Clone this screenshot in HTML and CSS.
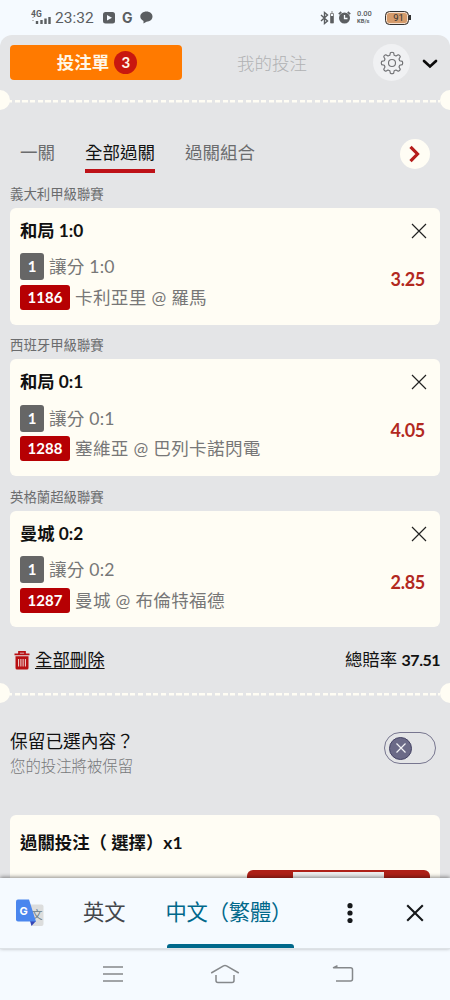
FILE: index.html
```html
<!DOCTYPE html>
<html lang="zh-Hant">
<head>
<meta charset="utf-8">
<title>投注單</title>
<link rel="stylesheet" href="styles.css">
</head>
<body>
<div class="phone">
  <header class="status">
    <div class="signal"><span>4G</span><svg width="20" height="8" viewBox="0 0 20 8"><path d="M2 1v1M2 4v1" stroke="#bbb" stroke-width="2"/><path d="M6 8V5M10.500 8V4M14.500 8V2.500M18.500 8V1" stroke="#5b5e61" stroke-width="2.400"/></svg></div>
    <span class="clock">23:32</span>
    <svg class="play" width="12" height="12" viewBox="0 0 12 12"><rect width="12" height="11.500" rx="2.500" fill="#5b5e61"/><path d="M4 3l5 2.800-5 2.800z" fill="#f5faff"/></svg>
    <span class="g-mark">G</span>
    <svg class="chat" width="13" height="13" viewBox="0 0 13 13"><path d="M6.500.5C10 .5 12.500 2.700 12.500 5.600s-2.500 5.100-6 5.100L3.500 12.500V10C1.500 9 .300 7.600.300 5.600.300 2.700 3 .5 6.500.5z" fill="#5b5e61"/></svg>
    <svg class="bt" width="15" height="14" viewBox="0 0 15 14"><path d="M1 4l6.500 6L4.500 12.500V1.500L7.500 4 1 10" fill="none" stroke="#5b5e61" stroke-width="1.400"/><path d="M10.500 2.500h3v9.500h-3zM11 1h2" fill="none" stroke="#888" stroke-width="1"/><path d="M12 5v7" stroke="#5b5e61" stroke-width="2.500"/></svg>
    <svg class="alarm" width="13" height="13" viewBox="0 0 13 13"><circle cx="6.500" cy="7" r="5.500" fill="#5b5e61"/><path d="M.8 3.200L3.300 1M12.200 3.200L9.700 1" stroke="#5b5e61" stroke-width="1.700"/><path d="M6.500 4v3.500h3" fill="none" stroke="#f5faff" stroke-width="1.300"/></svg>
    <div class="speed"><b>0.00</b><i>KB/s</i></div>
    <div class="battery">91</div><u class="cap"></u>
  </header>

  <main class="sheet">
    <div class="top">
      <button class="slip">投注單<span class="count">3</span></button>
      <span class="mine">我的投注</span>
      <span class="gear"><svg width="24" height="24" viewBox="0 0 24 24" fill="none" stroke="#717275" stroke-width="1.150" stroke-linejoin="round"><circle cx="12" cy="12" r="3.500"/><path d="M9.800 4.300L10.400 1.700Q12 .8 13.600 1.700L14.200 4.300L16 5L18.200 3.700Q20 4 20.300 5.800L19 8L19.700 9.800L22.300 10.400Q23.200 12 22.300 13.600L19.700 14.200L19 16L20.300 18.200Q20 20 18.200 20.300L16 19L14.200 19.700L13.600 22.300Q12 23.200 10.400 22.300L9.800 19.700L8 19L5.800 20.300Q4 20 3.700 18.200L5 16L4.300 14.200L1.700 13.600Q.8 12 1.700 10.400L4.300 9.800L5 8L3.700 5.800Q4 4 5.800 3.700L8 5z"/></svg></span>
      <svg class="chev" width="16" height="10" viewBox="0 0 16 10"><path d="M2 2l6 5.500L14 2" fill="none" stroke="#0b0b0b" stroke-width="2.700" stroke-linecap="round"/></svg>
    </div>
    <div class="tear"></div>

    <nav class="tabs">
      <span>一關</span><span class="on">全部過關</span><span>過關組合</span>
      <i class="next"><svg width="12" height="18" viewBox="0 0 12 18"><path d="M1.500 1.800L8.500 9l-7 7.200" fill="none" stroke="#b61e1b" stroke-width="3.200"/></svg></i>
    </nav>

    <section class="bet">
      <h3>義大利甲級聯賽</h3>
      <article class="card">
        <div class="name">和局 1:0</div>
        <div class="line"><b class="tag">1</b><span class="market">讓分 1:0</span></div>
        <div class="line"><b class="tag red">1186</b><span class="teams">卡利亞里 @ 羅馬</span></div>
        <svg class="x" width="16" height="16" viewBox="0 0 16 16"><path d="M1 1l14 14M15 1L1 15" stroke="#222" stroke-width="1.200"/></svg>
        <b class="odds">3.25</b>
      </article>
    </section>
    <section class="bet">
      <h3>西班牙甲級聯賽</h3>
      <article class="card">
        <div class="name">和局 0:1</div>
        <div class="line"><b class="tag">1</b><span class="market">讓分 0:1</span></div>
        <div class="line"><b class="tag red">1288</b><span class="teams">塞維亞 @ 巴列卡諾閃電</span></div>
        <svg class="x" width="16" height="16" viewBox="0 0 16 16"><path d="M1 1l14 14M15 1L1 15" stroke="#222" stroke-width="1.200"/></svg>
        <b class="odds">4.05</b>
      </article>
    </section>
    <section class="bet">
      <h3>英格蘭超級聯賽</h3>
      <article class="card">
        <div class="name">曼城 0:2</div>
        <div class="line"><b class="tag">1</b><span class="market">讓分 0:2</span></div>
        <div class="line"><b class="tag red">1287</b><span class="teams">曼城 @ 布倫特福德</span></div>
        <svg class="x" width="16" height="16" viewBox="0 0 16 16"><path d="M1 1l14 14M15 1L1 15" stroke="#222" stroke-width="1.200"/></svg>
        <b class="odds">2.85</b>
      </article>
    </section>

    <div class="summary">
      <svg width="16" height="19" viewBox="0 0 16 19"><path d="M.5 3.300h15M5 3V.9h6V3" fill="none" stroke="#b80f12" stroke-width="1.700"/><path d="M1.500 5.200h13V17q0 1.500-1.500 1.500H3Q1.500 18.500 1.500 17z" fill="#b80f12"/><path d="M4.600 8v7.500M6.900 8v7.500M9.100 8v7.500M11.400 8v7.500" stroke="#f0dedd" stroke-width="1"/></svg>
      <span class="clear">全部刪除</span>
      <span class="total">總賠率 <b>37.51</b></span>
    </div>
    <div class="tear"></div>

    <div class="keep">
      <div><div class="ask">保留已選內容？</div><div class="hint">您的投注將被保留</div></div>
      <span class="switch"><span class="knob"><svg width="12" height="12" viewBox="0 0 12 12"><path d="M1.500 1.500l9 9M10.500 1.500l-9 9" stroke="#f3f3f6" stroke-width="1.200"/></svg></span></span>
    </div>

    <div class="parlay">
      <div class="ptitle">過關投注（ 選擇）<span>x1</span></div>
      <div class="stake"><i></i></div>
    </div>
  </main>

  <div class="translate">
    <svg class="gt" width="28" height="28" viewBox="0 0 28 28"><path d="M10 5.500h15.500q2 0 2 2v17.500q0 2-2 2H16z" fill="#dcdddd"/><text x="15.500" y="20" class="wen">文</text><path d="M14 22h6l-4.500 5z" fill="#3545b5"/><path d="M2 .5h11L20 22.500H2Q0 22.500 0 20.500v-18Q0 .5 2 .5z" fill="#4a86ee"/><text x="3.500" y="15.500" class="gee">G</text></svg>
    <span class="en">英文</span>
    <span class="zh">中文（繁體）</span>
    <svg class="dots" width="6" height="20" viewBox="0 0 6 20"><g fill="#16181b"><circle cx="3" cy="2.700" r="2.600"/><circle cx="3" cy="10" r="2.600"/><circle cx="3" cy="17.500" r="2.600"/></g></svg>
    <svg class="close" width="18" height="18" viewBox="0 0 18 18"><path d="M1.200 1.200l15.600 15.600M16.800 1.200L1.200 16.800" stroke="#16181b" stroke-width="2.100"/></svg>
  </div>
  <footer class="nav">
    <svg width="22" height="18" viewBox="0 0 22 18"><path d="M1 2h20M1 9h20M1 16h20"/></svg>
    <svg class="home" width="30" height="20" viewBox="0 0 30 20"><path d="M1.200 9L13.500 1.800q1.500-.8 3 0L28.800 9M6 11v5.500q0 2 2 2h14q2 0 2-2V11"/></svg>
    <svg width="22" height="18" viewBox="0 0 22 18"><path d="M5.500.8L1.500 2.700H18.500q2 0 2 2V14q0 2-2 2H4"/></svg>
  </footer>
</div>
</body>
</html>
```
FILE: styles.css
```css
* { box-sizing: border-box; }
body { margin: 0; background: #f5faff; }
.phone { width: 450px; height: 1000px; overflow: hidden; display: flex; flex-direction: column; font-family: Lato, "Noto Sans CJK TC", sans-serif; color: #111; white-space: nowrap; }
svg { display: block; flex: none; }

.status { height: 35px; flex: none; display: flex; align-items: center; padding-left: 31px; color: #5b5e61; font-family: Roboto, sans-serif; }
.signal { width: 20px; font-size: 8.5px; font-weight: 700; line-height: 7px; }
.signal svg { margin-top: -2px; }
.clock { margin-left: 4px; width: 48px; font-size: 15.5px; }
.play { margin-right: 7px; }
.g-mark { width: 18px; font: 700 14px/20px Inter, sans-serif; }
.bt { margin-left: 167px; }
.alarm { margin-left: 3px; }
.speed { margin-left: 6px; width: 28px; font-size: 7.5px; line-height: 6.5px; }
.speed b, .speed i { display: block; font-style: normal; font-weight: 500; }
.speed i { font-size: 5.8px; font-weight: 700; line-height: 6px; }
.battery { width: 24px; height: 14px; border: 1.5px solid #333; border-radius: 4.5px; background: #d59b6b; color: #333; font-size: 9.5px; line-height: 12px; text-align: center; padding-left: 3px; box-shadow: inset 0 0 0 1px #f3dfcf; }
.cap { width: 1.5px; height: 5px; background: #333; }

.sheet { height: 843px; flex: none; overflow: hidden; background: #e4e5e7; border-radius: 12px 12px 0 0; display: flex; flex-direction: column; }
.top { height: 55px; flex: none; display: flex; align-items: center; padding-left: 10px; }
.slip { width: 172px; height: 35px; border: 0; padding: 0 0 0 2px; border-radius: 4px; background: #ff7a00; color: #fff7e8; font: 700 17.5px/35px Lato, "Noto Sans CJK TC", sans-serif; display: flex; align-items: center; justify-content: center; gap: 5px; }
.count { width: 23px; height: 23px; border-radius: 50%; background: #c8180f; font: 700 15px/23px Lato, sans-serif; }
.mine { margin-left: 55px; width: 136px; font-size: 17.5px; font-weight: 300; color: #b1b2b4; }
.gear { width: 37px; height: 37px; border-radius: 50%; background: #f0f1f3; display: flex; align-items: center; justify-content: center; }
.chev { margin-left: 12px; margin-top: 2px; }

.tear { height: 20px; flex: none; margin: 0 -10px; display: flex; align-items: center; justify-content: space-between; background: repeating-linear-gradient(90deg, #fffdf4 0 5.2px, transparent 5.2px 7.7px) 17.3px 10px / 433px 2.5px no-repeat; }
.tear::before, .tear::after { content: ""; width: 20px; height: 20px; flex: none; border-radius: 50%; background: #fffdf4; }

.tabs { height: 73px; flex: none; display: flex; align-items: flex-start; padding: 29px 20px 0; gap: 30px; font-size: 17.5px; line-height: 28px; color: #6b6c6e; }
.tabs span { height: 34px; }
.tabs .on { color: #111; border-bottom: 4px solid #be1218; }
.next { margin: 0 0 0 auto; width: 30px; height: 30px; border-radius: 50%; background: #fffdf4; display: flex; align-items: center; justify-content: center; }

.bet { height: 151.3px; flex: none; padding: 0 10px; }
.bet h3 { margin: 0; height: 25px; font-size: 13.4px; font-weight: 400; line-height: 22px; color: #6b6c6e; }
.card { height: 116.6px; border-radius: 6px; background: #fffdf4; padding: 9px 10px 0; display: grid; grid-template-columns: 1fr auto; grid-template-rows: 34px 31.5px 30px; }
.name { font-size: 17.3px; font-weight: 700; line-height: 27px; }
.line { grid-column: 1; display: flex; align-items: center; gap: 5px; font-size: 17.6px; line-height: 27px; color: #777; }
.line .teams { letter-spacing: .3px; }
.line .market { letter-spacing: .2px; }
.tag { background: #666; color: #fff; border-radius: 3px; height: 27px; width: 24px; text-align: center; font-size: 15px; line-height: 27px; }
.red { background: #b60003; height: 25px; line-height: 25px; width: 50px; }
.x { grid-column: 2; grid-row: 1; justify-self: end; margin: 6px 3px 0 0; }
.odds { grid-column: 2; grid-row: 2 / 4; font-size: 18px; letter-spacing: -.3px; line-height: 24px; margin: 16px 5px 0 0; color: #b2291f; }

.summary { height: 31px; margin-top: 8px; flex: none; display: flex; align-items: center; padding: 0 10px 0 14px; font-size: 17.4px; line-height: 26px; }
.summary + .tear { margin-top: 7px; }
.clear { margin-left: 5px; text-decoration: underline; text-underline-offset: 2px; text-decoration-thickness: 1px; }
.total { margin-left: auto; }
.total b { font-size: 16px; letter-spacing: -.5px; }

.keep { height: 112px; flex: none; display: flex; justify-content: space-between; align-items: flex-start; padding: 27px 14px 0 10px; }
.ask { font-size: 17.7px; line-height: 24px; }
.hint { font-size: 15.4px; line-height: 24px; color: #77787a; font-weight: 300; }
.switch { width: 52px; height: 32px; margin-top: 2px; border: 1px solid #77768f; border-radius: 16px; padding: 4px; }
.knob { width: 23px; height: 23px; border-radius: 50%; background: #6b6a87; border: 1px solid #454365; display: flex; align-items: center; justify-content: center; }

.parlay { flex: 1; margin: 0 10px; border-radius: 6px 6px 0 0; background: #fffdf4; padding: 0 10px; display: flex; flex-direction: column; }
.ptitle { height: 55px; font-size: 17.4px; font-weight: 700; line-height: 55px; }
.stake { align-self: flex-end; width: 183px; height: 30px; flex: none; border-radius: 6px; background: #ae2018; padding: 2px 46px 0; }
.stake i { display: block; height: 20px; background: #ededee; }

.translate { height: 71px; flex: none; position: relative; background: #f5faff; border-bottom: 1px solid #dde2e6; box-shadow: 0 -1px 4px rgba(0,0,0,.45); display: flex; align-items: center; padding-left: 16px; font-size: 21.3px; }
.wen { font: 11px "Noto Sans CJK TC", sans-serif; fill: #667b86; }
.gee { font: 700 11px Inter, sans-serif; fill: #fff; }
.en { margin-left: 39px; color: #43464b; width: 84px; height: 70px; line-height: 68px; }
.zh { color: #00688b; width: 127px; height: 70px; line-height: 68px; display: flex; flex-direction: column; text-indent: -1.5px; letter-spacing: -.2px; }
.zh::after { content: ""; height: 4px; margin-top: -2px; background: #00688b; border-radius: 3px 3px 0 0; }
.dots { margin-left: 53px; }
.close { margin-left: 53px; }
.nav { height: 51px; display: flex; align-items: center; justify-content: space-between; padding: 0 96px 2px 102px; }
.nav svg { fill: none; stroke: #85888b; stroke-width: 1.5; stroke-linejoin: round; }
.nav .home { margin-right: 6px; }
```
